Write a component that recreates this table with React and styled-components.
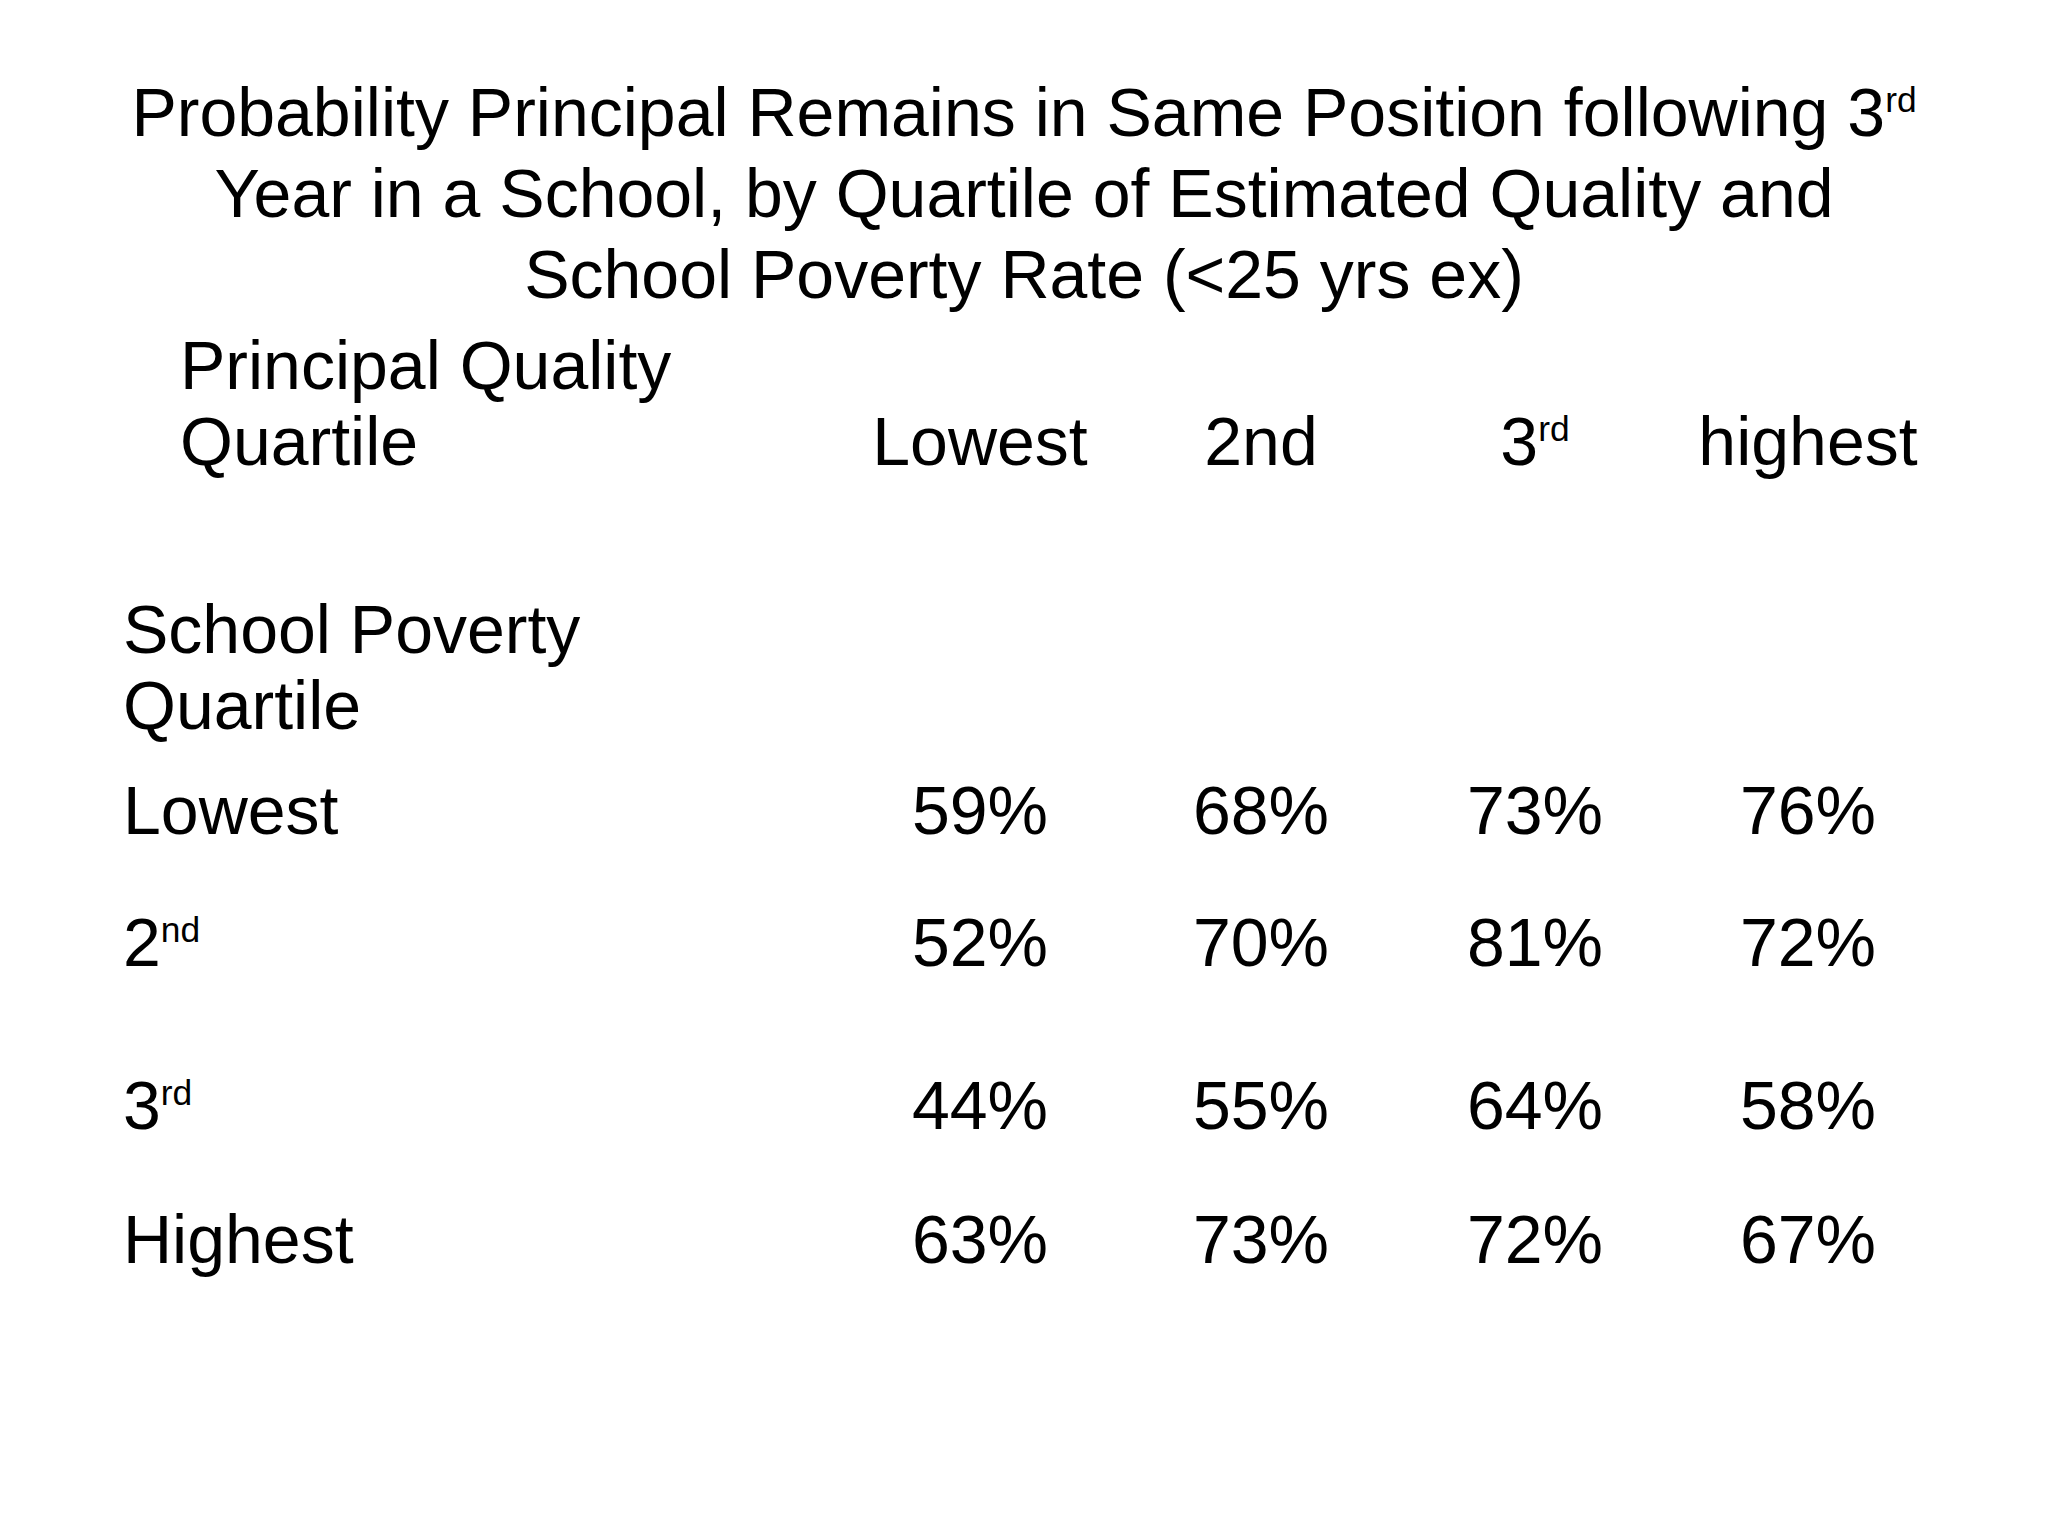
import React from 'react'
import styled, { createGlobalStyle } from 'styled-components'

const GlobalStyle = createGlobalStyle`
  html, body {
    margin: 0;
    padding: 0;
    background: #fff;
  }
  body {
    font-family: "Liberation Sans", Arial, sans-serif;
    color: #000;
  }
`

const Slide = styled.div`
  width: 2048px;
  height: 1536px;
  background: #fff;
  padding-top: 72px;
  box-sizing: border-box;
  font-size: 68px;
`

const Title = styled.h1`
  margin: 0;
  font-size: 68px;
  font-weight: normal;
  line-height: 81px;
  text-align: center;
`

const Sup = styled.sup`
  font-size: 0.52em;
  line-height: 0;
  vertical-align: super;
`

const Grid = styled.div`
  display: grid;
  grid-template-columns: 720px 274px 288px 260px 286px;
  padding-left: 123px;
  line-height: 76px;
  margin-top: ${(p) => p.$gap}px;
`

const HeadLabel = styled.div`
  padding-left: 57px;
`

const ColHead = styled.div`
  align-self: end;
  text-align: center;
`

const RowLabel = styled.div``

const Cell = styled.div`
  text-align: center;
`

const SectionLabel = styled.div`
  padding-left: 123px;
  line-height: 76px;
  margin-top: 112px;
`

const rows = [
  { label: 'Lowest', gap: 29, values: ['59%', '68%', '73%', '76%'] },
  { label: <>2<Sup>nd</Sup></>, gap: 56, values: ['52%', '70%', '81%', '72%'] },
  { label: <>3<Sup>rd</Sup></>, gap: 87, values: ['44%', '55%', '64%', '58%'] },
  { label: 'Highest', gap: 58, values: ['63%', '73%', '72%', '67%'] },
]

export default function App() {
  return (
    <>
      <GlobalStyle />
      <Slide>
        <Title>
          Probability Principal Remains in Same Position following 3<Sup>rd</Sup>
          <br />
          Year in a School, by Quartile of Estimated Quality and
          <br />
          School Poverty Rate (&lt;25 yrs ex)
        </Title>

        <Grid $gap={12}>
          <HeadLabel>
            Principal Quality
            <br />
            Quartile
          </HeadLabel>
          <ColHead>Lowest</ColHead>
          <ColHead>2nd</ColHead>
          <ColHead>3<Sup>rd</Sup></ColHead>
          <ColHead>highest</ColHead>
        </Grid>

        <SectionLabel>
          School Poverty
          <br />
          Quartile
        </SectionLabel>

        {rows.map((r, i) => (
          <Grid key={i} $gap={r.gap}>
            <RowLabel>{r.label}</RowLabel>
            {r.values.map((v, j) => (
              <Cell key={j}>{v}</Cell>
            ))}
          </Grid>
        ))}
      </Slide>
    </>
  )
}
